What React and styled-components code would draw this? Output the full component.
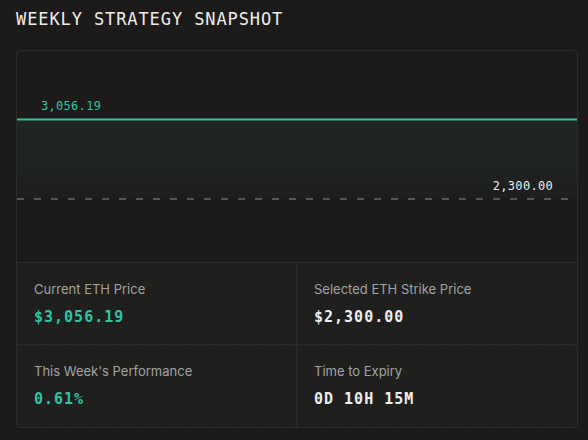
import React from 'react';
import styled, { createGlobalStyle } from 'styled-components';

const colors = {
  bg: '#1c1b1a',
  card: '#1c1b1a',
  cell: '#1e1e1d',
  border: '#2c2c2b',
  teal: '#2ec4a7',
  white: '#eeeeee',
  label: '#a3a3a3',
  dash: '#6b6b6b',
};

const mono = `"DejaVu Sans Mono", "Liberation Mono", monospace`;

const GlobalStyle = createGlobalStyle`
  html, body {
    margin: 0;
    padding: 0;
    background: ${colors.bg};
  }
  body {
    width: 588px;
    height: 440px;
    overflow: hidden;
  }
`;

const Page = styled.div`
  padding: 10px 10px 0 16px;
  box-sizing: border-box;
`;

const Title = styled.h2`
  margin: 0 0 21px;
  font-family: ${mono};
  font-weight: 400;
  font-size: 17px;
  line-height: 19px;
  letter-spacing: 0.9px;
  color: ${colors.white};
  text-transform: uppercase;
`;

const Card = styled.div`
  width: 562px;
  border: 1px solid ${colors.border};
  border-radius: 4px;
  background: ${colors.card};
  box-sizing: border-box;
  overflow: hidden;
`;

const Chart = styled.div`
  position: relative;
  height: 211px;
`;

const ChartSvg = styled.svg`
  display: block;
  width: 100%;
  height: 100%;
`;

const PriceTag = styled.span`
  position: absolute;
  top: ${p => p.$top}px;
  ${p => (p.$right != null ? `right: ${p.$right}px;` : `left: ${p.$left}px;`)}
  font-family: ${mono};
  font-size: 12px;
  line-height: 14px;
  letter-spacing: 0.3px;
  color: ${p => (p.$accent ? colors.teal : colors.white)};
`;

const Stats = styled.div`
  display: grid;
  grid-template-columns: 280px 1fr;
  grid-auto-rows: 82px;
  border-top: 1px solid ${colors.border};
`;

const Cell = styled.div`
  padding: 17px 17px 0;
  background-color: ${colors.cell};
  background-image: radial-gradient(rgba(255, 255, 255, 0.035) 0.6px, transparent 0.9px);
  background-size: 3px 3px;
  border-right: ${p => (p.$last ? 'none' : `1px solid ${colors.border}`)};
  border-bottom: ${p => (p.$bottom ? 'none' : `1px solid ${colors.border}`)};
  box-sizing: border-box;
`;

const Label = styled.div`
  font-family: Inter, "Noto Sans", sans-serif;
  font-size: 13px;
  line-height: 18px;
  color: ${colors.label};
`;

const Value = styled.div`
  margin-top: 9px;
  font-family: ${mono};
  font-weight: 700;
  font-size: 15px;
  line-height: 20px;
  letter-spacing: 1px;
  color: ${p => (p.$accent ? colors.teal : colors.white)};
`;

const stats = [
  { label: 'Current ETH Price', value: '$3,056.19', accent: true },
  { label: 'Selected ETH Strike Price', value: '$2,300.00' },
  { label: "This Week's Performance", value: '0.61%', accent: true },
  { label: 'Time to Expiry', value: '0D 10H 15M' },
];

function PriceChart() {
  return (
    <Chart>
      <ChartSvg viewBox="0 0 560 211" preserveAspectRatio="none">
        <defs>
          <linearGradient id="area" x1="0" y1="0" x2="0" y2="1">
            <stop offset="0" stopColor="#1f2423" />
            <stop offset="0.5" stopColor="#1f2423" />
            <stop offset="1" stopColor="#1d1e1d" />
          </linearGradient>
        </defs>
        <rect x="0" y="70" width="560" height="77" fill="url(#area)" />
        <line x1="0" y1="68.5" x2="560" y2="68.5" stroke={colors.teal} strokeWidth="2" />
        <line
          x1="0"
          y1="148"
          x2="560"
          y2="148"
          stroke={colors.dash}
          strokeWidth="1.5"
          strokeDasharray="7 10"
        />
      </ChartSvg>
      <PriceTag $accent $left={24} $top={48}>3,056.19</PriceTag>
      <PriceTag $right={24} $top={128}>2,300.00</PriceTag>
    </Chart>
  );
}

export default function App() {
  return (
    <Page>
      <GlobalStyle />
      <Title>Weekly Strategy Snapshot</Title>
      <Card>
        <PriceChart />
        <Stats>
          {stats.map((s, i) => (
            <Cell key={s.label} $last={i % 2 === 1} $bottom={i > 1}>
              <Label>{s.label}</Label>
              <Value $accent={s.accent}>{s.value}</Value>
            </Cell>
          ))}
        </Stats>
      </Card>
    </Page>
  );
}
